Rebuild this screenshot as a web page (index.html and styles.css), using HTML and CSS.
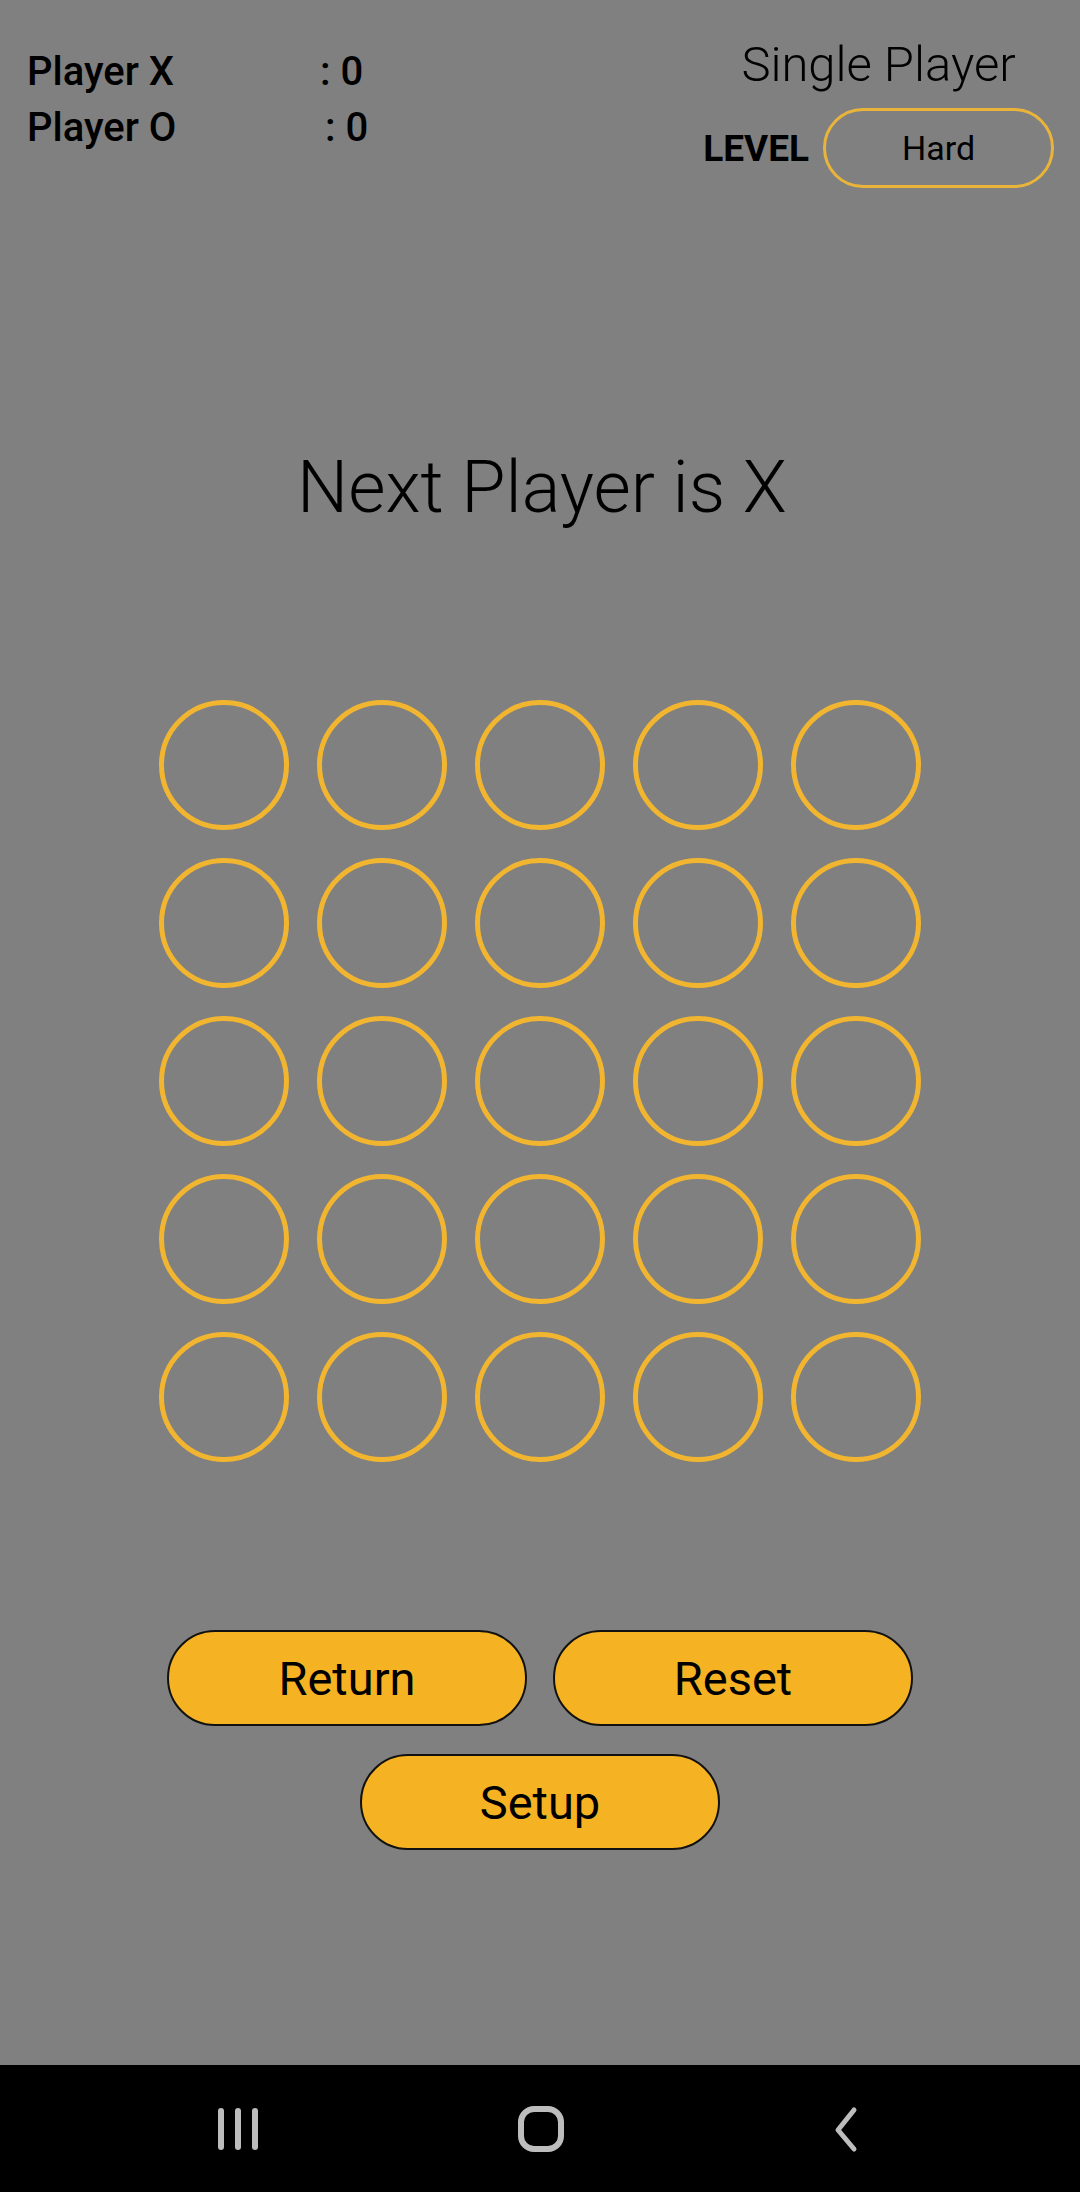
FILE: index.html
```html
<!DOCTYPE html>
<html>
<head>
<meta charset="utf-8">
<link rel="stylesheet" href="styles.css">
</head>
<body>
<div class="screen">
  <main class="app">
    <header class="top">
      <div class="scores">
        <div class="score-row"><span class="score-label">Player X</span><span class="score-val">: 0</span></div>
        <div class="score-row row-o"><span class="score-label">Player O</span><span class="score-val">: 0</span></div>
      </div>
      <div class="mode">
        <div class="mode-title">Single Player</div>
        <div class="level-row">
          <span class="level-label">LEVEL</span>
          <span class="level-pill">Hard</span>
        </div>
      </div>
    </header>

    <h1 class="status">Next Player is X</h1>

    <div class="board">
      <div class="cell"></div><div class="cell"></div><div class="cell"></div><div class="cell"></div><div class="cell"></div>
      <div class="cell"></div><div class="cell"></div><div class="cell"></div><div class="cell"></div><div class="cell"></div>
      <div class="cell"></div><div class="cell"></div><div class="cell"></div><div class="cell"></div><div class="cell"></div>
      <div class="cell"></div><div class="cell"></div><div class="cell"></div><div class="cell"></div><div class="cell"></div>
      <div class="cell"></div><div class="cell"></div><div class="cell"></div><div class="cell"></div><div class="cell"></div>
    </div>

    <div class="actions">
      <div class="action-row">
        <button class="btn">Return</button>
        <button class="btn">Reset</button>
      </div>
      <div class="action-row">
        <button class="btn">Setup</button>
      </div>
    </div>
  </main>

  <nav class="navbar">
    <svg class="nav-icon" width="60" height="60" viewBox="0 0 60 60">
      <g stroke="#bdbdbd" stroke-width="6" stroke-linecap="round">
        <line x1="13" y1="12" x2="13" y2="48"/>
        <line x1="30" y1="12" x2="30" y2="48"/>
        <line x1="47" y1="12" x2="47" y2="48"/>
      </g>
    </svg>
    <svg class="nav-icon" width="60" height="60" viewBox="0 0 60 60">
      <rect x="10" y="10" width="40" height="40" rx="13" ry="13" fill="none" stroke="#bdbdbd" stroke-width="6"/>
    </svg>
    <svg class="nav-icon" width="60" height="60" viewBox="0 0 60 60">
      <polyline points="40,11 24,31 40,50" fill="none" stroke="#bdbdbd" stroke-width="5" stroke-linecap="round" stroke-linejoin="round"/>
    </svg>
  </nav>
</div>
</body>
</html>
```

FILE: styles.css
```css
* { box-sizing: border-box; }

html, body {
  margin: 0;
  padding: 0;
}

body {
  width: 1080px;
  height: 2192px;
  background: #808080;
  font-family: Roboto, "Noto Sans", "Liberation Sans", sans-serif;
  color: #000;
  overflow: hidden;
}

.screen {
  display: flex;
  flex-direction: column;
  height: 2192px;
}

.app {
  height: 2065px;
  display: flex;
  flex-direction: column;
}

.top {
  display: flex;
  justify-content: space-between;
  align-items: flex-start;
  padding: 37px 26px 0 27px;
}

.scores {
  display: flex;
  flex-direction: column;
  padding-top: 7px;
}

.score-row {
  display: flex;
  font-size: 40px;
  font-weight: 500;
  line-height: 56px;
}

.score-label {
  width: 293px;
}

.row-o .score-label {
  width: 298px;
}

.mode {
  display: flex;
  flex-direction: column;
  align-items: center;
}

.mode-title {
  font-size: 49px;
  font-weight: 300;
  line-height: 56px;
  margin-bottom: 15px;
}

.level-row {
  display: flex;
  align-items: center;
  gap: 14px;
}

.level-label {
  font-size: 37px;
  font-weight: 700;
}

.level-pill {
  width: 231px;
  height: 80px;
  border: 3px solid #eab43b;
  border-radius: 40px;
  display: flex;
  align-items: center;
  justify-content: center;
  font-size: 34px;
  font-weight: 400;
}

.status {
  margin: 260px 0 0;
  text-align: center;
  font-size: 72px;
  font-weight: 300;
  line-height: 80px;
  padding-left: 4px;
}

.board {
  align-self: center;
  display: grid;
  grid-template-columns: repeat(5, 130px);
  grid-auto-rows: 130px;
  gap: 28px;
  margin-top: 172px;
}

.cell {
  border: 5px solid #f2b530;
  border-radius: 50%;
}

.actions {
  display: flex;
  flex-direction: column;
  align-items: center;
  gap: 28px;
  margin-top: 168px;
}

.action-row {
  display: flex;
  gap: 26px;
}

.btn {
  width: 360px;
  height: 96px;
  border: 2px solid #111;
  border-radius: 48px;
  background: #f5b324;
  font-family: inherit;
  font-size: 47px;
  font-weight: 400;
  color: #000;
  padding: 0;
}

.navbar {
  flex: 1;
  background: #000;
  display: flex;
  align-items: center;
  justify-content: space-between;
  padding: 0 206px 0 208px;
}

.nav-icon {
  display: block;
}
```
